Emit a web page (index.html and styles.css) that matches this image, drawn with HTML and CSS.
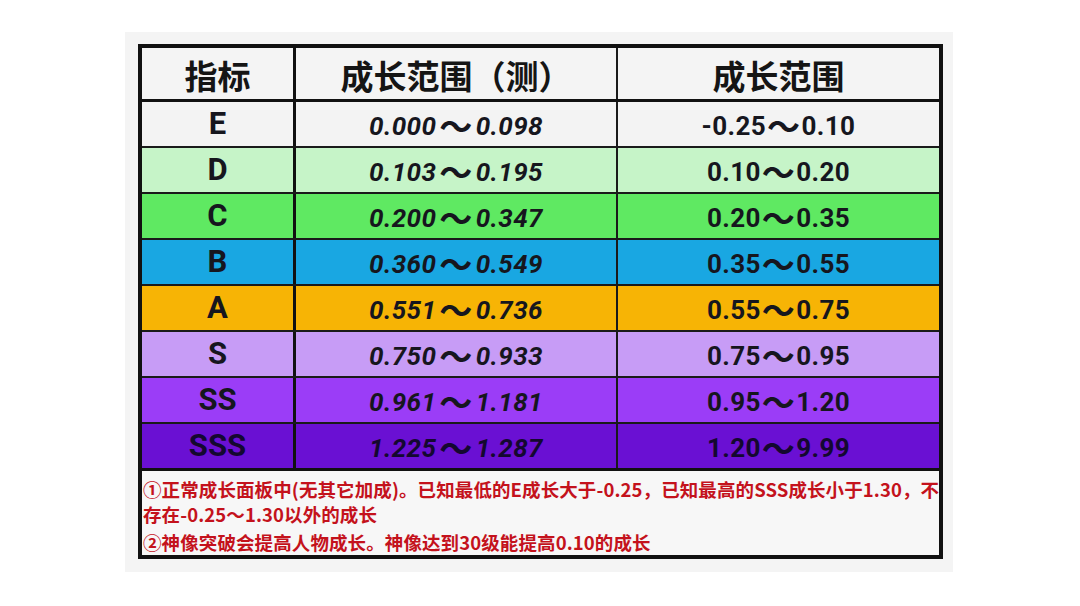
FILE: index.html
```html
<!DOCTYPE html>
<html lang="zh">
<head>
<meta charset="utf-8">
<title>成长范围</title>
<link rel="stylesheet" href="styles.css">
</head>
<body>
<div class="page">
  <div class="card">
    <div class="table">
      <div class="row head">
        <div class="cell c1">指标</div>
        <div class="cell c2">成长范围（测）</div>
        <div class="cell c3">成长范围</div>
      </div>
      <div class="row r-e">
        <div class="cell c1 grade">E</div>
        <div class="cell c2 num it">0.000<span class="t">～</span>0.098</div>
        <div class="cell c3 num">-0.25<span class="t">～</span>0.10</div>
      </div>
      <div class="row r-d">
        <div class="cell c1 grade">D</div>
        <div class="cell c2 num it">0.103<span class="t">～</span>0.195</div>
        <div class="cell c3 num">0.10<span class="t">～</span>0.20</div>
      </div>
      <div class="row r-c">
        <div class="cell c1 grade">C</div>
        <div class="cell c2 num it">0.200<span class="t">～</span>0.347</div>
        <div class="cell c3 num">0.20<span class="t">～</span>0.35</div>
      </div>
      <div class="row r-b">
        <div class="cell c1 grade">B</div>
        <div class="cell c2 num it">0.360<span class="t">～</span>0.549</div>
        <div class="cell c3 num">0.35<span class="t">～</span>0.55</div>
      </div>
      <div class="row r-a">
        <div class="cell c1 grade">A</div>
        <div class="cell c2 num it">0.551<span class="t">～</span>0.736</div>
        <div class="cell c3 num">0.55<span class="t">～</span>0.75</div>
      </div>
      <div class="row r-s">
        <div class="cell c1 grade">S</div>
        <div class="cell c2 num it">0.750<span class="t">～</span>0.933</div>
        <div class="cell c3 num">0.75<span class="t">～</span>0.95</div>
      </div>
      <div class="row r-ss">
        <div class="cell c1 grade">SS</div>
        <div class="cell c2 num it">0.961<span class="t">～</span>1.181</div>
        <div class="cell c3 num">0.95<span class="t">～</span>1.20</div>
      </div>
      <div class="row r-sss last">
        <div class="cell c1 grade">SSS</div>
        <div class="cell c2 num it">1.225<span class="t">～</span>1.287</div>
        <div class="cell c3 num">1.20<span class="t">～</span>9.99</div>
      </div>
      <div class="notes">
        <p>①正常成长面板中(无其它加成)。已知最低的E成长大于-0.25，已知最高的SSS成长小于1.30，不<br>存在-0.25～1.30以外的成长</p>
        <p class="second">②神像突破会提高人物成长。神像达到30级能提高0.10的成长</p>
      </div>
    </div>
  </div>
</div>
</body>
</html>
```

FILE: styles.css
```css
html, body {
  margin: 0;
  padding: 0;
  background: #ffffff;
}

.page {
  width: 1080px;
  height: 606px;
  padding: 32px 0 0 125px;
  box-sizing: border-box;
}

.card {
  width: 828px;
  height: 540px;
  background: #f4f4f4;
  padding: 12px 0 0 13px;
  box-sizing: border-box;
}

.table {
  width: 805px;
  border: 4px solid #111111;
  box-sizing: border-box;
  background: #f4f4f4;
  font-family: Roboto, "Noto Sans CJK SC", sans-serif;
  color: #16161e;
}

.row {
  display: grid;
  grid-template-columns: 154px 322px 321px;
  height: 46px;
  box-sizing: border-box;
  border-bottom: 2px solid #1a1a1a;
}

.row.head {
  height: 54px;
  border-bottom: 3px solid #111111;
}

.row.last {
  height: 47px;
  border-bottom: 3px solid #111111;
}

.cell {
  display: flex;
  align-items: center;
  justify-content: center;
  white-space: nowrap;
}

.c1 {
  border-right: 3px solid #111111;
}

.c2 {
  border-right: 2px solid #1a1a1a;
}

.head .cell {
  font-family: "Noto Sans CJK SC", sans-serif;
  font-weight: 700;
  font-size: 33px;
  color: #151515;
  padding-top: 2px;
}

.grade {
  font-weight: 700;
  font-size: 31px;
  padding-bottom: 2px;
}

.num {
  font-weight: 700;
  font-size: 26px;
  letter-spacing: 0.4px;
  padding-top: 3px;
}

.it {
  font-style: italic;
}

.t {
  font-family: "Noto Sans CJK SC", sans-serif;
  font-style: normal;
  font-weight: 700;
  font-size: 33px;
  line-height: 1;
  margin: 0 1px;
}

.c2 .t {
  margin: 0 3px;
}

.r-e { background: #f3f3f3; }
.r-d { background: #c6f4c8; }
.r-c { background: #5fe962; }
.r-b { background: #19a7e2; }
.r-a { background: #f7b405; }
.r-s { background: #c79cf6; }
.r-ss { background: #9b3df7; }
.r-sss { background: #6a10d3; color: #140830; }

.notes {
  height: 84px;
  box-sizing: border-box;
  padding: 6px 0 0 1px;
  background: #f7f7f7;
  font-family: "Noto Sans CJK SC", sans-serif;
  font-weight: 700;
  font-size: 18.5px;
  letter-spacing: 0.1px;
  line-height: 25px;
  color: #c4121c;
  white-space: nowrap;
}

.notes p {
  margin: 0;
}

.notes .second {
  margin-top: 3px;
}
```
